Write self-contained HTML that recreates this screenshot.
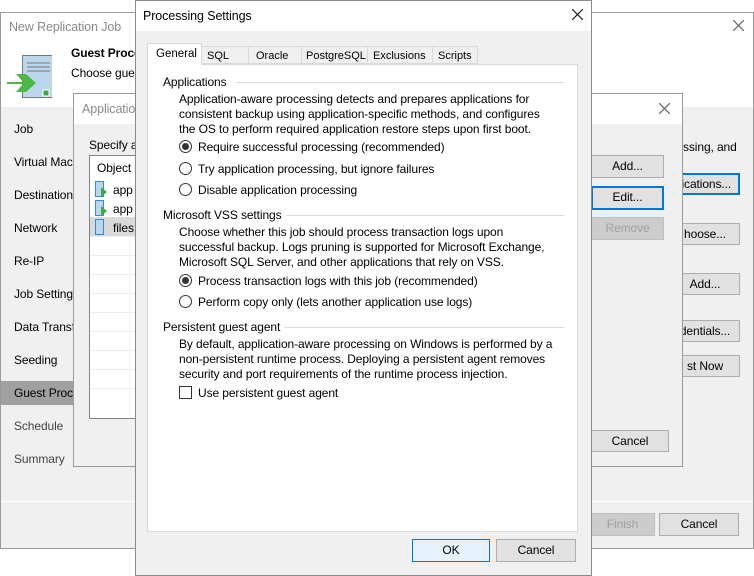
<!DOCTYPE html>
<html><head><meta charset="utf-8"><style>
*{box-sizing:border-box;margin:0;padding:0}
body{width:754px;height:576px;background:#fff;position:relative;overflow:hidden;font-family:"Liberation Sans",sans-serif;font-size:12px;color:#000;letter-spacing:-0.1px}
.a{position:absolute;white-space:nowrap}
.btn{position:absolute;background:#e1e1e1;border:1px solid #adadad;text-align:center;line-height:20px;font-size:12px}
.dis{color:#a0a0a0;background:#cccccc;border-color:#bfbfbf}
.blue{border:2px solid #0078d7;line-height:18px}
.rad{position:absolute;width:13px;height:13px;border:1px solid #333;border-radius:50%;background:#fff}
.rad.on::after{content:"";position:absolute;left:2px;top:2px;width:7px;height:7px;border-radius:50%;background:#333}
.grp{position:absolute;height:1px;background:#dcdcdc}
.nav{position:absolute;left:14px;color:#000}
.tab{position:absolute;top:46px;height:18px;border:1px solid #d9d9d9;border-left:none;background:#f0f0f0;padding:3px 0 0 5px;font-size:11px;letter-spacing:0}
</style></head><body>
<div class="a" style="left:0;top:12px;width:754px;height:537px;border:1px solid #9a9a9a;background:#f0f0f0"></div>
<div class="a" style="left:1px;top:13px;width:752px;height:94px;background:#fff"></div>
<div class="a" style="left:9px;top:20px;color:#8a8a8a;font-size:12.5px">New Replication Job</div>
<svg class="a" style="left:733px;top:20px" width="11" height="11"><path d="M0 0L11 11M11 0L0 11" stroke="#666" stroke-width="1.2"/></svg>
<div class="a" style="left:71px;top:46px;font-weight:bold">Guest Processing</div>
<div class="a" style="left:71px;top:66px">Choose guest</div>
<svg class="a" style="left:6px;top:53px" width="46" height="48"><rect x="16.5" y="2.5" width="32" height="42" fill="#bcd6ee" stroke="#777"/><line x1="21" y1="10" x2="44" y2="10" stroke="#777"/><line x1="21" y1="14" x2="44" y2="14" stroke="#777"/><line x1="21" y1="18" x2="44" y2="18" stroke="#777"/><rect x="37" y="37" width="6" height="6" fill="#3daa3d" stroke="#fff"/><path d="M1 29h16l-7-8h10l10 9-10 9h-10l7-8h-16z" fill="#4cb944"/></svg>
<div class="a" style="left:1px;top:381px;width:150px;height:24px;background:#a0a0a0"></div>
<div class="nav a" style="top:122px">Job</div>
<div class="nav a" style="top:155px">Virtual Machines</div>
<div class="nav a" style="top:188px">Destination</div>
<div class="nav a" style="top:221px">Network</div>
<div class="nav a" style="top:254px">Re-IP</div>
<div class="nav a" style="top:287px">Job Settings</div>
<div class="nav a" style="top:320px">Data Transfer</div>
<div class="nav a" style="top:353px">Seeding</div>
<div class="nav a" style="top:386px">Guest Processing</div>
<div class="nav a" style="top:419px;color:#444">Schedule</div>
<div class="nav a" style="top:452px;color:#444">Summary</div>
<div class="a" style="left:1px;top:501px;width:752px;height:1px;background:#fff"></div>
<div class="a" style="left:683px;top:140px">ssing, and</div>
<div class="btn blue" style="left:670px;top:173px;width:70px">lications...</div>
<div class="btn" style="left:670px;top:223px;width:70px">hoose...</div>
<div class="btn" style="left:670px;top:273px;width:70px">Add...</div>
<div class="btn" style="left:670px;top:320px;width:70px">dentials...</div>
<div class="btn" style="left:670px;top:355px;width:70px">st Now</div>
<div class="btn dis" style="left:590px;top:513px;width:65px;height:23px">Finish</div>
<div class="btn" style="left:659px;top:513px;width:80px;height:23px">Cancel</div>
<div class="a" style="left:73px;top:93px;width:610px;height:374px;border:1px solid #9a9a9a;background:#f0f0f0"></div>
<div class="a" style="left:74px;top:94px;width:608px;height:30px;background:#fff"></div>
<div class="a" style="left:82px;top:102px;color:#8a8a8a;font-size:12.5px">Application-Aware Processing</div>
<svg class="a" style="left:659px;top:103px" width="11" height="11"><path d="M0 0L11 11M11 0L0 11" stroke="#666" stroke-width="1.2"/></svg>
<div class="a" style="left:89px;top:138px">Specify application</div>
<div class="a" style="left:89px;top:155px;width:60px;height:264px;border:1px solid #828282;background:#fff"></div>
<div class="a" style="left:97px;top:161px">Object</div>
<div class="a" style="left:90px;top:217px;width:50px;height:19px;background:#d9d9d9"></div>
<div class="a" style="left:90px;top:236px;width:50px;height:1px;background:#eee"></div>
<div class="a" style="left:90px;top:255px;width:50px;height:1px;background:#eee"></div>
<div class="a" style="left:90px;top:274px;width:50px;height:1px;background:#eee"></div>
<div class="a" style="left:90px;top:293px;width:50px;height:1px;background:#eee"></div>
<div class="a" style="left:90px;top:312px;width:50px;height:1px;background:#eee"></div>
<div class="a" style="left:90px;top:331px;width:50px;height:1px;background:#eee"></div>
<div class="a" style="left:90px;top:350px;width:50px;height:1px;background:#eee"></div>
<div class="a" style="left:90px;top:369px;width:50px;height:1px;background:#eee"></div>
<div class="a" style="left:90px;top:388px;width:50px;height:1px;background:#eee"></div>
<svg class="a" style="left:95px;top:181px" width="12" height="54"><rect x=".5" y=".5" width="8" height="15" fill="#bcd6ee" stroke="#3a8ad0"/><path d="M6 6l6 5-6 5z" fill="#3daa3d"/><rect x=".5" y="19.5" width="8" height="15" fill="#bcd6ee" stroke="#3a8ad0"/><path d="M6 25l6 5-6 5z" fill="#3daa3d"/><rect x=".5" y="38.5" width="8" height="15" fill="#bcd6ee" stroke="#3a8ad0"/></svg>
<div class="a" style="left:113px;top:183px">app</div>
<div class="a" style="left:113px;top:202px">app</div>
<div class="a" style="left:113px;top:221px">files</div>
<div class="btn" style="left:591px;top:155px;width:73px;height:23px">Add...</div>
<div class="btn blue" style="left:591px;top:186px;width:73px;height:24px">Edit...</div>
<div class="btn dis" style="left:591px;top:217px;width:73px;height:23px">Remove</div>
<div class="btn" style="left:591px;top:430px;width:78px;height:22px">Cancel</div>
<div class="a" style="left:135px;top:0;width:457px;height:576px;border:1px solid #8a8a8a;background:#f0f0f0"></div>
<div class="a" style="left:136px;top:1px;width:455px;height:30px;background:#fff"></div>
<div class="a" style="left:143px;top:9px;font-size:12.5px">Processing Settings</div>
<svg class="a" style="left:572px;top:9px" width="11" height="11"><path d="M0 0L11 11M11 0L0 11" stroke="#222" stroke-width="1.2"/></svg>
<div class="a" style="left:147px;top:64px;width:431px;height:468px;border:1px solid #d9d9d9;background:#fff"></div>
<div class="a" style="left:147px;top:43px;width:55px;height:22px;border:1px solid #d9d9d9;border-bottom:none;background:#fff;padding:4px 0 0 8px;font-size:11.5px;letter-spacing:0">General</div>
<div class="tab" style="left:202px;width:47px">SQL</div>
<div class="tab" style="left:249px;width:53px;padding-left:7px">Oracle</div>
<div class="tab" style="left:302px;width:66px;padding-left:4px">PostgreSQL</div>
<div class="tab" style="left:368px;width:65px;padding-left:5px">Exclusions</div>
<div class="tab" style="left:433px;width:45px">Scripts</div>
<div class="a" style="left:163px;top:75px">Applications</div>
<div class="grp" style="left:236px;top:82px;width:328px"></div>
<div class="a" style="left:179px;top:92px;line-height:15px">Application-aware processing detects and prepares applications for<br>consistent backup using application-specific methods, and configures<br>the OS to perform required application restore steps upon first boot.</div>
<div class="rad on" style="left:179px;top:140px"></div><div class="a" style="left:198px;top:140px">Require successful processing (recommended)</div>
<div class="rad" style="left:179px;top:162px"></div><div class="a" style="left:198px;top:162px">Try application processing, but ignore failures</div>
<div class="rad" style="left:179px;top:183px"></div><div class="a" style="left:198px;top:183px">Disable application processing</div>
<div class="a" style="left:163px;top:208px">Microsoft VSS settings</div>
<div class="grp" style="left:286px;top:215px;width:278px"></div>
<div class="a" style="left:179px;top:225px;line-height:15px">Choose whether this job should process transaction logs upon<br>successful backup. Logs pruning is supported for Microsoft Exchange,<br>Microsoft SQL Server, and other applications that rely on VSS.</div>
<div class="rad on" style="left:179px;top:274px"></div><div class="a" style="left:198px;top:274px">Process transaction logs with this job (recommended)</div>
<div class="rad" style="left:179px;top:295px"></div><div class="a" style="left:198px;top:295px">Perform copy only (lets another application use logs)</div>
<div class="a" style="left:163px;top:320px">Persistent guest agent</div>
<div class="grp" style="left:284px;top:327px;width:280px"></div>
<div class="a" style="left:179px;top:337px;line-height:15px">By default, application-aware processing on Windows is performed by a<br>non-persistent runtime process. Deploying a persistent agent removes<br>security and port requirements of the runtime process injection.</div>
<div class="a" style="left:179px;top:386px;width:13px;height:13px;border:1px solid #333;background:#fff"></div>
<div class="a" style="left:198px;top:386px">Use persistent guest agent</div>
<div class="btn" style="left:412px;top:539px;width:78px;height:23px;background:#e5f1fb;border-color:#0078d7">OK</div>
<div class="btn" style="left:496px;top:539px;width:80px;height:23px">Cancel</div>
</body></html>
